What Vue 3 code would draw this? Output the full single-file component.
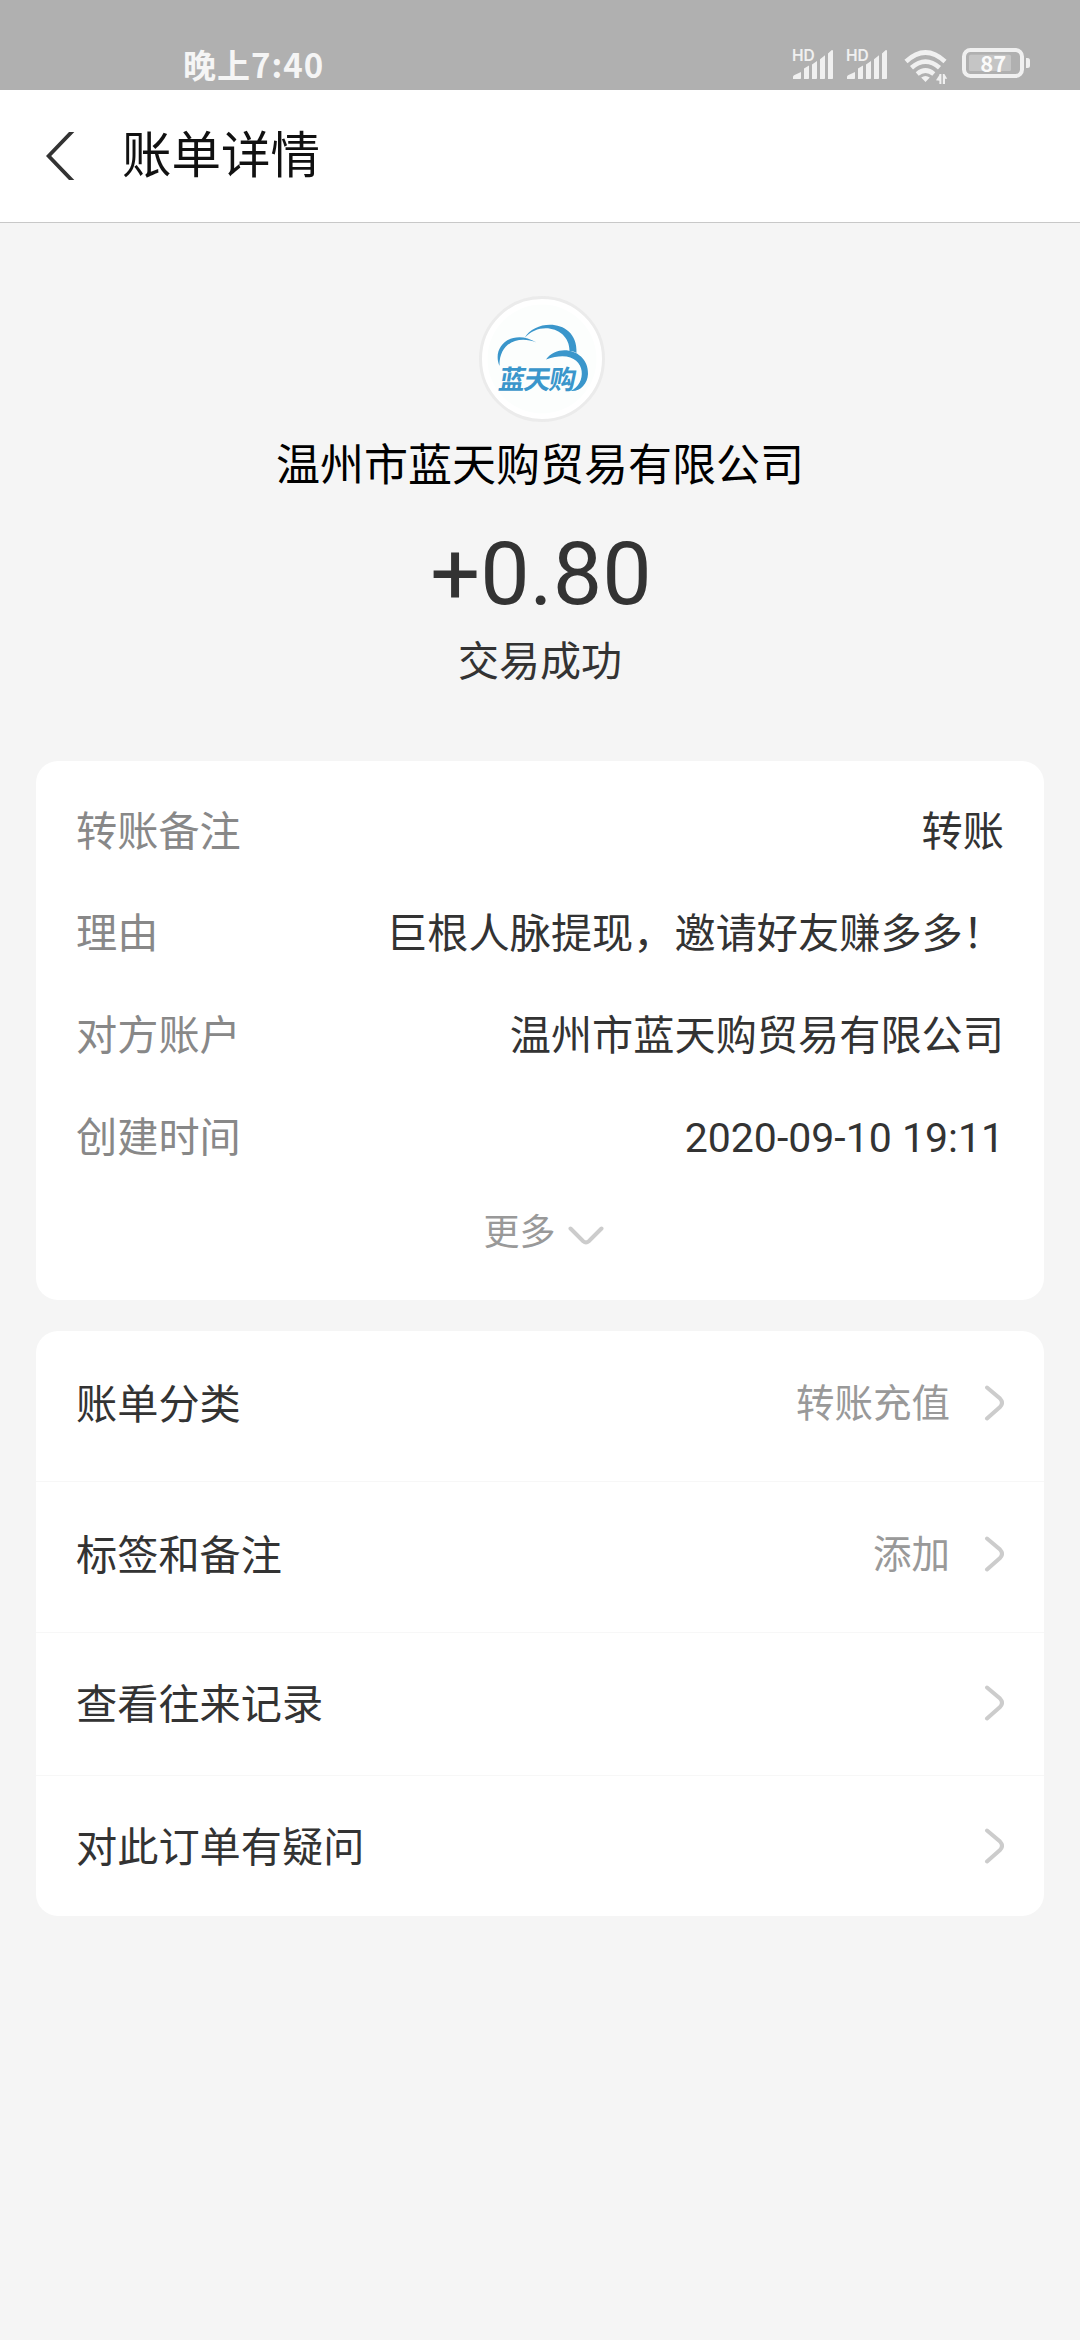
<script setup>
const details = [
  { label: '转账备注', value: '转账' },
  { label: '理由', value: '巨根人脉提现，邀请好友赚多多！' },
  { label: '对方账户', value: '温州市蓝天购贸易有限公司' },
  { label: '创建时间', value: '2020-09-10 19:11', numeric: true },
]

const actions = [
  { label: '账单分类', value: '转账充值', size: 'tall' },
  { label: '标签和备注', value: '添加', size: 'tall' },
  { label: '查看往来记录', value: '', size: 'mid' },
  { label: '对此订单有疑问', value: '', size: 'low' },
]
</script>

<template>
  <div class="page">
    <div class="status">
      <span class="clock">晚上7:40</span>
      <div class="indicators">
        <svg v-for="n in 2" :key="n" class="signal" width="42" height="38" viewBox="0 -4 42 38">
          <text class="hd" x="0" y="14.3">HD</text>
          <path d="M1 32V29.8Q1.2 28.6 2.5 28L9 25V31.2Q9 32 8.2 32ZM12 32V21.5L17 18.6V31.2Q17 32 16.2 32H12.8ZM20 32V17.5L25 14V31.2Q25 32 24.2 32H20.8ZM28 32V12.3L33 8.300V31.2Q33 32 32.2 32H28.8ZM36 32V6.5L39.5 3.2Q41 2.6 41 4.5V31.2Q41 32 40.2 32H36.8Z" />
        </svg>
        <svg class="wifi" width="44" height="36" viewBox="0 0 44 36">
          <g fill="none" stroke="#f0f0f0" stroke-width="4.6">
            <path d="M2 13.5Q21.5-4.500 41 13.5" />
            <path d="M7.5 19.800Q21.5 7.500 35.5 19.800" />
            <path d="M13.2 26Q21.5 19 29.8 26" />
          </g>
          <path fill="#f0f0f0" d="M17.2 29.6Q21.5 26.400 25.8 29.6L21.5 34ZM35.4 26H37.400V36H35.4V32.800L32 32.200L35.400 27ZM38.800 26H40.400L43.200 30.800H41V36H38.800Z" />
        </svg>
        <svg class="battery" width="70" height="36" viewBox="0 -2 70 36">
          <rect x="2" y="3" width="58" height="26" rx="6.5" fill="none" stroke="#f0f0f0" stroke-width="4" />
          <rect x="7" y="7.7" width="42" height="16.3" rx="1.500" fill="#c5c5c5" />
          <path d="M64 11h1.500q2.500 0 2.500 2.500v5q0 2.500-2.500 2.500H64z" fill="#f0f0f0" />
          <text class="level" x="18.300" y="24.5">87</text>
        </svg>
      </div>
    </div>

    <header class="navbar">
      <svg class="back" width="30" height="48" viewBox="0 0 30 48">
        <path d="M23 0H28.300L5.200 24L28.300 48H23L0 24Z" fill="#333" />
      </svg>
      <h1>账单详情</h1>
    </header>

    <section class="summary">
      <svg class="avatar" width="126" height="126" viewBox="0 0 126 126">
        <circle cx="63" cy="63" r="61.500" fill="#fff" stroke="#ebebeb" stroke-width="3" />
        <circle cx="63" cy="63" r="54.500" fill="#fcfefd" />
        <g fill="#3a96cb">
          <path d="M20.500 70C12 50 34 32 57.500 46.500C40 39.500 20 46 20.500 70Z" />
          <path d="M45.500 42C57 22 99 23 97.500 57C93.500 55 92 55.500 90.500 55.300C91 32 61 24 45.500 42Z" />
          <path d="M67 63.500C80 46 110 55 109 78C108.500 88 101 96 91.500 95C111 87 107 49 67 63.500Z" />
        </g>
        <text class="brand" transform="translate(18.500 93) skewX(-10)" textLength="77">蓝天购</text>
      </svg>
      <div class="merchant">温州市蓝天购贸易有限公司</div>
      <div class="amount">+0.80</div>
      <div class="state">交易成功</div>
    </section>

    <section class="card details">
      <div v-for="row in details" :key="row.label" class="detail">
        <span class="label">{{ row.label }}</span>
        <span class="value" :class="{ numeric: row.numeric }">{{ row.value }}</span>
      </div>
      <div class="more">
        <span>更多</span>
        <svg width="36" height="20" viewBox="0 0 36 20">
          <path d="M2.500 2.500L15.200 15.200Q18 17.500 20.800 15.200L33.500 2.500" />
        </svg>
      </div>
    </section>

    <section class="card actions">
      <div v-for="row in actions" :key="row.label" class="action" :class="row.size">
        <span class="name">{{ row.label }}</span>
        <span class="hint">{{ row.value }}</span>
        <svg width="20" height="36" viewBox="0 0 20 36">
          <path d="M3 2.500L16 13.500Q20 18 16 22L3 33.500" />
        </svg>
      </div>
    </section>
  </div>
</template>

<style>
body {
  background: #f5f5f5;
}
</style>

<style scoped>
.page {
  width: 1080px;
  min-height: 2340px;
  background: #f5f5f5;
  color: #333;
  font-family: Roboto, 'Noto Sans CJK SC', sans-serif;
  box-sizing: border-box;
}

.status {
  display: flex;
  justify-content: space-between;
  height: 90px;
  padding: 41px 48px 0 183px;
  box-sizing: border-box;
  background: #b0b0b0;
}

.clock {
  color: #f5f5f5;
  font: 700 33px/46px 'Noto Sans CJK SC', sans-serif;
  letter-spacing: 1px;
}

.indicators {
  display: flex;
  align-items: flex-start;
  padding-top: 6px;
}

.indicators svg {
  overflow: visible;
}

.signal {
  margin: -4px 12px 0 0;
  fill: #f0f0f0;
}

.hd {
  font: 600 15.500px Inter, sans-serif;
}

.wifi {
  margin: 1px 14px 0 4px;
}

.battery {
  margin-top: -2px;
}

.level {
  fill: #fafafa;
  font: 700 22px 'Noto Sans CJK SC', sans-serif;
}

.navbar {
  display: flex;
  align-items: center;
  height: 133px;
  padding-left: 46px;
  box-sizing: border-box;
  border-bottom: 1px solid #c8c8c8;
  background: #fff;
}

.back {
  margin-right: 46px;
}

h1 {
  margin: 0;
  color: #111;
  font-size: 49.500px;
  font-weight: 400;
  line-height: 72px;
}

.summary {
  display: flex;
  flex-direction: column;
  align-items: center;
  height: 538px;
  padding-top: 73px;
  box-sizing: border-box;
}

.avatar {
  margin-left: 3px;
}

.brand {
  fill: #3a96cb;
  font: 700 26.500px 'Noto Sans CJK SC', sans-serif;
}

.merchant {
  margin-top: 12px;
  color: #000;
  font-size: 44px;
  line-height: 64px;
}

.amount {
  margin-top: 24px;
  padding-left: 2px;
  font-size: 88px;
  line-height: 104px;
}

.state {
  margin-top: 6px;
  font-size: 41px;
  line-height: 60px;
}

.card {
  width: 1008px;
  margin: 0 auto;
  border-radius: 22px;
  background: #fff;
  overflow: hidden;
}

.details {
  height: 539px;
  padding: 16px 40px 0;
  box-sizing: border-box;
}

.detail {
  display: flex;
  justify-content: space-between;
  align-items: center;
  height: 102px;
  font-size: 41.200px;
}

.label {
  color: #888;
}

.numeric {
  padding-top: 7px;
  font-size: 41px;
}

.more {
  display: flex;
  justify-content: center;
  align-items: center;
  gap: 12px;
  height: 88px;
  padding-left: 7px;
  color: #999;
  font-size: 36px;
}

.more svg {
  margin-top: 13px;
}

.more path,
.action path {
  fill: none;
  stroke: #ccc;
  stroke-width: 4;
  stroke-linecap: round;
}

.actions {
  margin-top: 31px;
}

.action {
  display: flex;
  align-items: center;
  padding: 0 40px;
  box-sizing: border-box;
  border-bottom: 1px solid #f7f7f7;
}

.action:last-child {
  border-bottom: 0;
}

.tall {
  height: 151px;
  padding-bottom: 6px;
}

.mid {
  height: 143px;
  padding-bottom: 2px;
}

.low {
  height: 140px;
}

.name {
  flex: 1;
  padding-bottom: 5px;
  font-size: 41.200px;
}

.hint {
  margin-right: 34px;
  padding-bottom: 7px;
  color: #999;
  font-size: 38.500px;
}
</style>
